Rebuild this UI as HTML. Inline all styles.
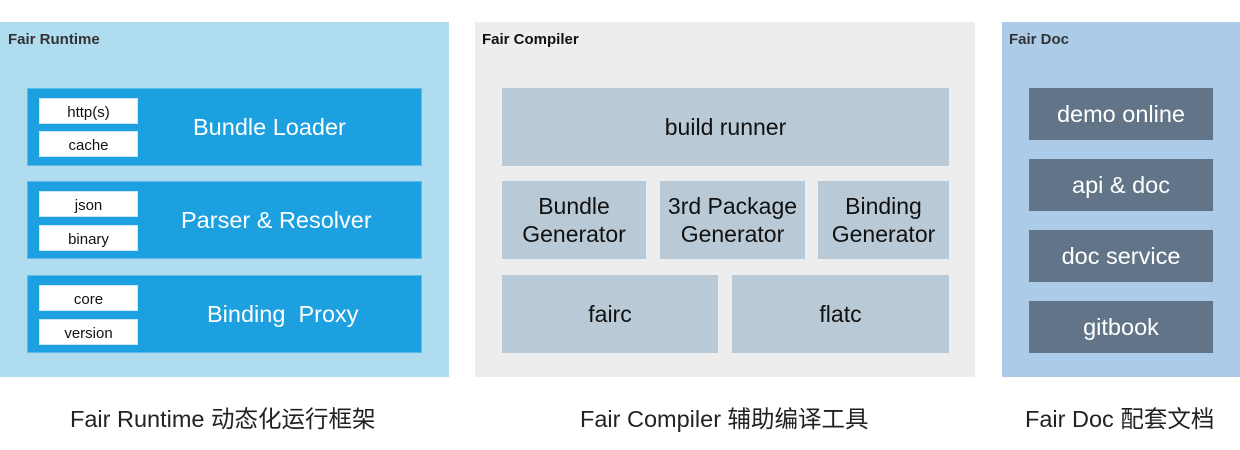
<!DOCTYPE html>
<html><head><meta charset="utf-8"><style>
body{margin:0;width:1240px;height:450px;background:#fff;position:relative;font-family:"Liberation Sans","Noto Sans CJK SC",sans-serif;overflow:hidden}
.a{position:absolute;box-sizing:border-box;display:flex;align-items:center;justify-content:center;text-align:center}
.t{position:absolute;font-weight:bold;font-size:15px;color:#333}
.w{background:#fff;font-size:15px;color:#111;border:1px solid #cfe6f5;padding-top:2px}
.bl{background:#1ca0e0;border:1px solid #5cbbe8}
.bt{position:absolute;color:#fff;font-size:23.5px;white-space:pre}
.g{background:#b9c9d5;font-size:23px;color:#111;line-height:28px}
.d{background:#627488;color:#fff;font-size:23.5px}
.c{position:absolute;top:400px;font-size:23.5px;color:#222;white-space:nowrap}
</style></head><body>
<div class="a" style="left:0;top:22px;width:449px;height:355px;background:#b0dcf0"></div>
<div class="t" style="left:8px;top:31px">Fair Runtime</div>
<div class="a bl" style="left:27px;top:88px;width:395px;height:78px"></div>
<div class="a w" style="left:39px;top:98px;width:99px;height:26px">http(s)</div>
<div class="a w" style="left:39px;top:131px;width:99px;height:26px">cache</div>
<div class="bt" style="left:193px;top:114px">Bundle Loader</div>
<div class="a bl" style="left:27px;top:181px;width:395px;height:78px"></div>
<div class="a w" style="left:39px;top:191px;width:99px;height:26px">json</div>
<div class="a w" style="left:39px;top:225px;width:99px;height:26px">binary</div>
<div class="bt" style="left:181px;top:207px">Parser &amp; Resolver</div>
<div class="a bl" style="left:27px;top:275px;width:395px;height:78px"></div>
<div class="a w" style="left:39px;top:285px;width:99px;height:26px">core</div>
<div class="a w" style="left:39px;top:319px;width:99px;height:26px">version</div>
<div class="bt" style="left:207px;top:301px">Binding  Proxy</div>

<div class="a" style="left:475px;top:22px;width:500px;height:355px;background:#ededed"></div>
<div class="t" style="left:482px;top:31px;color:#111">Fair Compiler</div>
<div class="a g" style="left:502px;top:88px;width:447px;height:78px">build runner</div>
<div class="a g" style="left:502px;top:181px;width:144px;height:78px">Bundle<br>Generator</div>
<div class="a g" style="left:660px;top:181px;width:145px;height:78px">3rd Package<br>Generator</div>
<div class="a g" style="left:818px;top:181px;width:131px;height:78px">Binding<br>Generator</div>
<div class="a g" style="left:502px;top:275px;width:216px;height:78px">fairc</div>
<div class="a g" style="left:732px;top:275px;width:217px;height:78px">flatc</div>

<div class="a" style="left:1002px;top:22px;width:238px;height:355px;background:#accbe9"></div>
<div class="t" style="left:1009px;top:31px">Fair Doc</div>
<div class="a d" style="left:1029px;top:88px;width:184px;height:52px">demo online</div>
<div class="a d" style="left:1029px;top:159px;width:184px;height:52px">api &amp; doc</div>
<div class="a d" style="left:1029px;top:230px;width:184px;height:52px">doc service</div>
<div class="a d" style="left:1029px;top:301px;width:184px;height:52px">gitbook</div>

<div class="c" style="left:70px">Fair Runtime 动态化运行框架</div>
<div class="c" style="left:580px">Fair Compiler 辅助编译工具</div>
<div class="c" style="left:1025px">Fair Doc 配套文档</div>
</body></html>
